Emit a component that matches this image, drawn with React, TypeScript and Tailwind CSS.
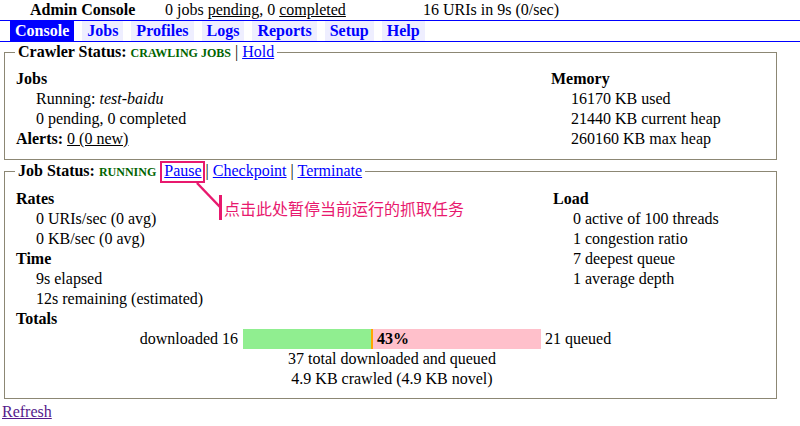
const tabs = ["Console", "Jobs", "Profiles", "Logs", "Reports", "Setup", "Help"];

function Legend({ children }: { children: React.ReactNode }) {
  return (
    <legend className="-ml-px px-[3px] h-[20px] leading-[20px] whitespace-nowrap">{children}</legend>
  );
}

export default function App() {
  return (
    <div className="relative w-[800px] h-[426px] overflow-hidden bg-white text-black font-['Liberation_Serif',serif] text-[16px] leading-[20px]">
      {/* summary line */}
      <div className="flex h-[20px] whitespace-nowrap">
        <div className="w-[165px] pl-[30px] font-bold">Admin Console</div>
        <div className="w-[258px]">
          0 jobs <span className="underline">pending</span>, 0 <span className="underline">completed</span>
        </div>
        <div>16 URIs in 9s (0/sec)</div>
      </div>

      {/* tabs */}
      <div className="flex h-[22px] gap-2 border-y border-[#0000ff] pl-[10px]">
        {tabs.map((t) => (
          <div
            key={t}
            className={
              t === "Console"
                ? "px-[5px] font-bold bg-[#0000ff] text-white"
                : "px-[5px] font-bold bg-[#eeeeff] text-[#0000ff]"
            }
          >
            {t}
          </div>
        ))}
      </div>

      {/* crawler status */}
      <fieldset className="ml-[4px] w-[773px] border border-[#8c8774] pl-[11px] pt-[7px] pb-[10px]">
        <Legend>
          <span className="font-bold">Crawler Status: </span>
          <span className="font-bold text-[12px] leading-[12px] text-[#006400]">CRAWLING JOBS</span> |{" "}
          <span className="underline text-[#0000ff]">Hold</span>
        </Legend>
        <div className="grid grid-cols-[535px_1fr]">
          <div>
            <div className="font-bold">Jobs</div>
            <div className="pl-[20px]">
              Running: <i>test-baidu</i>
            </div>
            <div className="pl-[20px]">0 pending, 0 completed</div>
            <div>
              <span className="font-bold">Alerts: </span>
              <span className="underline">0 (0 new)</span>
            </div>
          </div>
          <div>
            <div className="font-bold">Memory</div>
            <div className="pl-[20px]">16170 KB used</div>
            <div className="pl-[20px]">21440 KB current heap</div>
            <div className="pl-[20px]">260160 KB max heap</div>
          </div>
        </div>
      </fieldset>

      {/* job status */}
      <fieldset className="mt-[1px] ml-[4px] w-[773px] border border-[#8c8774] pl-[11px] pt-[8px] pb-[9px]">
        <Legend>
          <span className="font-bold">Job Status: </span>
          <span className="font-bold text-[12px] leading-[12px] text-[#006400]">RUNNING</span>
          {"\u00a0 "}
          <span className="underline text-[#0000ff]">Pause</span> |{" "}
          <span className="underline text-[#0000ff]">Checkpoint</span> |{" "}
          <span className="underline text-[#0000ff]">Terminate</span>
        </Legend>
        <div className="grid grid-cols-[537px_1fr]">
          <div>
            <div className="font-bold">Rates</div>
            <div className="pl-[20px]">0 URIs/sec (0 avg)</div>
            <div className="pl-[20px]">0 KB/sec (0 avg)</div>
            <div className="font-bold">Time</div>
            <div className="pl-[20px]">9s elapsed</div>
            <div className="pl-[20px]">12s remaining (estimated)</div>
          </div>
          <div>
            <div className="font-bold">Load</div>
            <div className="pl-[20px]">0 active of 100 threads</div>
            <div className="pl-[20px]">1 congestion ratio</div>
            <div className="pl-[20px]">7 deepest queue</div>
            <div className="pl-[20px]">1 average depth</div>
          </div>
        </div>
        <div className="font-bold">Totals</div>
        <div className="grid grid-cols-[227px_298px_1fr] whitespace-nowrap">
          <div className="pr-[5px] text-right">downloaded 16</div>
          <div className="flex h-[20px]">
            <div className="w-[128px] bg-[#90ee90]" />
            <div className="w-[2px] bg-[#ffa500]" />
            <div className="flex-1 bg-[#ffc0cb] pl-[4px] font-bold">43%</div>
          </div>
          <div className="pl-[4px]">21 queued</div>
          <div />
          <div className="text-center">37 total downloaded and queued</div>
          <div />
          <div />
          <div className="text-center">4.9 KB crawled (4.9 KB novel)</div>
          <div />
        </div>
      </fieldset>

      <div className="mt-[3px] pl-[2px] text-[#551a8b] underline">Refresh</div>

      {/* annotation */}
      <div className="absolute left-[160px] top-[161px] w-[45px] h-[22px] border-2 border-[#e8196e]" />
      <svg className="absolute left-0 top-0 pointer-events-none" width="800" height="426">
        <line x1="197" y1="183" x2="220" y2="207" stroke="#e8196e" strokeWidth="2.5" />
        <rect x="219" y="195" width="3" height="25" fill="#e8196e" />
      </svg>
      <div className="absolute left-[224px] top-[198px] text-[16px] leading-[20px] text-[#e8196e] font-['Noto_Sans_CJK_SC',sans-serif] whitespace-nowrap">
        点击此处暂停当前运行的抓取任务
      </div>
    </div>
  );
}
